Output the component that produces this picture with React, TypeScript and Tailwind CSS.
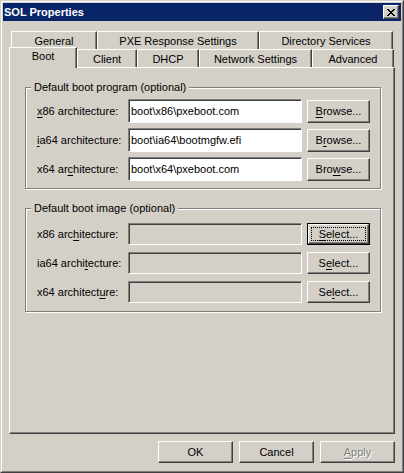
import React from "react";

const raised =
  "border border-t-white border-l-white border-r-[#404040] border-b-[#404040] shadow-[inset_-1px_-1px_0_#808080]";
const sunken =
  "border border-t-[#808080] border-l-[#808080] border-r-white border-b-white shadow-[inset_1px_1px_0_#404040]";

function Mn({ text, idx }: { text: string; idx: number }) {
  return (
    <>
      {text.slice(0, idx)}
      <span className="underline underline-offset-[2px] decoration-1">{text[idx]}</span>
      {text.slice(idx + 1)}
    </>
  );
}

function Tab({ label, w, selected }: { label: string; w: string; selected?: boolean }) {
  return (
    <div
      className={`${w} ${
        selected ? "h-[21px] -mt-[2px] -mb-[1px] relative z-10 pb-[3px]" : "h-[18px] pt-[2px]"
      } flex items-center justify-center bg-[#d4d0c8] border-t border-l border-r border-t-white border-l-white border-r-[#404040] shadow-[inset_-1px_0_0_#808080] whitespace-nowrap`}
    >
      {label}
    </div>
  );
}

function Button({
  children,
  w,
  h,
  focused,
}: {
  children: React.ReactNode;
  w: string;
  h: string;
  focused?: boolean;
}) {
  if (focused) {
    return (
      <div className={`${w} ${h} border border-black flex`}>
        <div className={`flex-1 ${raised} flex items-center justify-center p-[2px]`}>
          <div className="w-full h-full border border-dotted border-black flex items-center justify-center">
            {children}
          </div>
        </div>
      </div>
    );
  }
  return <div className={`${w} ${h} ${raised} flex items-center justify-center`}>{children}</div>;
}

function Group({
  legend,
  children,
  className,
}: {
  legend: string;
  children: React.ReactNode;
  className: string;
}) {
  return (
    <div
      className={`relative w-[356px] border border-[#808080] shadow-[inset_1px_1px_0_#fff,1px_1px_0_#fff] ${className}`}
    >
      <span className="absolute left-[5px] -top-[8px] px-[3px] bg-[#d4d0c8] leading-[14px] whitespace-nowrap">
        {legend}
      </span>
      {children}
    </div>
  );
}

export default function App() {
  return (
    <div className="w-[404px] h-[473px] bg-[#d4d0c8] border border-t-[#d4d0c8] border-l-[#d4d0c8] border-r-[#404040] border-b-[#404040] font-['Liberation_Sans',Arial,sans-serif] text-[11px] text-black leading-[13px] select-none">
      <div className="h-full border border-t-white border-l-white border-r-[#808080] border-b-[#808080] p-px flex flex-col">
        {/* Title bar */}
        <div className="h-[18px] bg-[#0a246a] flex items-center pl-[1px] pr-[2px]">
          <span className="text-white font-bold text-[11px] flex-1">SOL Properties</span>
          <div className={`w-[16px] h-[14px] bg-[#d4d0c8] ${raised} flex items-center justify-center`}>
            <svg width="8" height="7" viewBox="0 0 8 7" shapeRendering="crispEdges">
              <path
                fill="#000"
                d="M0 0h2v1H0zM6 0h2v1H6zM1 1h2v1H1zM5 1h2v1H5zM2 2h4v1H2zM3 3h2v1H3zM2 4h4v1H2zM1 5h2v1H1zM5 5h2v1H5zM0 6h2v1H0zM6 6h2v1H6z"
              />
            </svg>
          </div>
        </div>

        {/* Body */}
        <div className="flex flex-col px-[6px] pt-[10px]">
          {/* back row tabs */}
          <div className="flex pl-[2px]">
            <Tab label="General" w="w-[86px]" />
            <Tab label="PXE Response Settings" w="w-[162px]" />
            <Tab label="Directory Services" w="w-[134px]" />
          </div>
          {/* front row tabs */}
          <div className="flex items-start">
            <Tab label="Boot" w="w-[68px]" selected />
            <Tab label="Client" w="w-[60px]" />
            <Tab label="DHCP" w="w-[62px]" />
            <Tab label="Network Settings" w="w-[113px]" />
            <Tab label="Advanced" w="w-[82px]" />
          </div>

          {/* Panel */}
          <div className={`w-[386px] h-[367px] ${raised} pl-[15px] pt-[19px] flex flex-col`}>
            <Group legend="Default boot program (optional)" className="pt-[11px] pb-[7px] pl-[11px]">
              <div className="flex flex-col gap-[5px]">
                {[
                  { l: <Mn text="x86 architecture:" idx={0} />, v: "boot\\x86\\pxeboot.com", b: 0 },
                  { l: <Mn text="ia64 architecture:" idx={0} />, v: "boot\\ia64\\bootmgfw.efi", b: 1 },
                  { l: <Mn text="x64 architecture:" idx={6} />, v: "boot\\x64\\pxeboot.com", b: 3 },
                ].map((r, i) => (
                  <div key={i} className="flex items-center h-[24px]">
                    <div className="w-[91px] whitespace-nowrap">{r.l}</div>
                    <div className={`w-[174px] h-[24px] bg-white ${sunken} flex items-center pl-[2px] whitespace-nowrap`}>
                      {r.v}
                    </div>
                    <div className="ml-[5px]">
                      <Button w="w-[63px]" h="h-[23px]">
                        <Mn text="Browse..." idx={r.b} />
                      </Button>
                    </div>
                  </div>
                ))}
              </div>
            </Group>

            <Group legend="Default boot image (optional)" className="mt-[19px] pt-[14px] pb-[8px] pl-[11px]">
              <div className="flex flex-col gap-[7px]">
                {[
                  { l: <Mn text="x86 architecture:" idx={7} />, b: 0, f: true },
                  { l: <Mn text="ia64 architecture:" idx={10} />, b: 1, f: false },
                  { l: <Mn text="x64 architecture:" idx={13} />, b: 2, f: false },
                ].map((r, i) => (
                  <div key={i} className="flex items-center h-[22px]">
                    <div className="w-[91px] whitespace-nowrap">{r.l}</div>
                    <div className={`w-[174px] h-[22px] bg-[#d4d0c8] ${sunken}`} />
                    <div className="ml-[5px]">
                      <Button w="w-[63px]" h="h-[22px]" focused={r.f}>
                        <Mn text="Select..." idx={r.b} />
                      </Button>
                    </div>
                  </div>
                ))}
              </div>
            </Group>
          </div>

          {/* Bottom buttons */}
          <div className="flex justify-end gap-[6px] mt-[7px] pr-[0px] w-[386px]">
            <Button w="w-[75px]" h="h-[22px]">OK</Button>
            <Button w="w-[75px]" h="h-[22px]">Cancel</Button>
            <Button w="w-[75px]" h="h-[22px]">
              <span className="text-[#808080] [text-shadow:1px_1px_0_#fff]">
                <Mn text="Apply" idx={0} />
              </span>
            </Button>
          </div>
        </div>
      </div>
    </div>
  );
}
